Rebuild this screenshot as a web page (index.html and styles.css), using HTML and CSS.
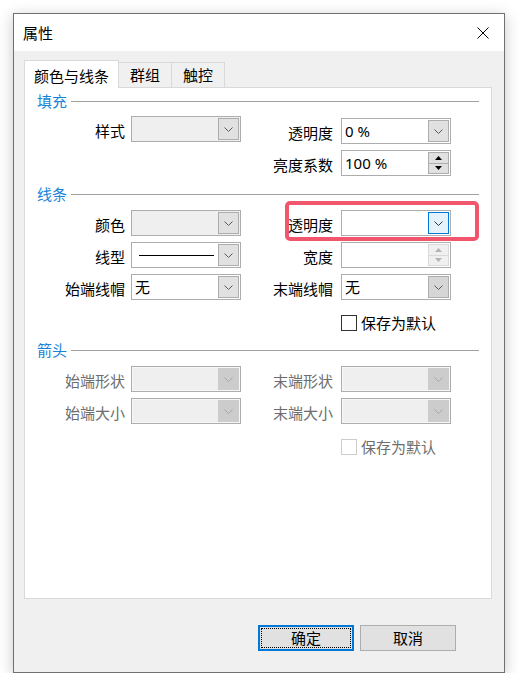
FILE: index.html
```html
<!DOCTYPE html>
<html lang="zh-CN">
<head>
<meta charset="utf-8">
<title>属性</title>
<link rel="stylesheet" href="styles.css">
</head>
<body>
<div class="window">
  <div class="titlebar">
    <span class="title">属性</span>
    <svg class="close" width="12" height="12" viewBox="0 0 12 12"><path d="M0.5 0.5 L11.5 11.5 M11.5 0.5 L0.5 11.5" stroke="#000" stroke-width="1" fill="none"/></svg>
  </div>
  <div class="body">
    <div class="tabs">
      <div class="tab active">颜色与线条</div>
      <div class="tab">群组</div>
      <div class="tab">触控</div>
    </div>
    <div class="panel">
      <div class="group-head"><span>填充</span><i></i></div>
      <div class="fields fill">
        <div class="lbl">样式</div>
        <div class="combo gray"><span class="val"></span><span class="drop"><svg width="9" height="5" viewBox="0 0 9 5"><path d="M0.5 0.5 L4.5 4.5 L8.5 0.5" fill="none" stroke="currentColor"/></svg></span></div>
        <div class="lbl r low">透明度</div>
        <div class="combo low"><span class="val">0 %</span><span class="drop"><svg width="9" height="5" viewBox="0 0 9 5"><path d="M0.5 0.5 L4.5 4.5 L8.5 0.5" fill="none" stroke="currentColor"/></svg></span></div>
        <div class="lbl r c3">亮度系数</div>
        <div class="combo spin"><span class="val">100 %</span><span class="spinbtns"><span class="sb"><svg width="7" height="4" viewBox="0 0 7 4"><path d="M0 4 L3.5 0 L7 4Z" fill="currentColor"/></svg></span><span class="sb"><svg width="7" height="4" viewBox="0 0 7 4"><path d="M0 0 L3.5 4 L7 0Z" fill="currentColor"/></svg></span></span></div>
      </div>

      <div class="group-head g2"><span>线条</span><i></i></div>
      <div class="fields lines">
        <div class="lbl">颜色</div>
        <div class="combo gray"><span class="val"></span><span class="drop"><svg width="9" height="5" viewBox="0 0 9 5"><path d="M0.5 0.5 L4.5 4.5 L8.5 0.5" fill="none" stroke="currentColor"/></svg></span></div>
        <div class="lbl r">透明度</div>
        <div class="combo"><span class="val"></span><span class="drop focus"><svg width="9" height="5" viewBox="0 0 9 5"><path d="M0.5 0.5 L4.5 4.5 L8.5 0.5" fill="none" stroke="currentColor"/></svg></span></div>

        <div class="lbl">线型</div>
        <div class="combo"><span class="line-sample"><i></i></span><span class="drop"><svg width="9" height="5" viewBox="0 0 9 5"><path d="M0.5 0.5 L4.5 4.5 L8.5 0.5" fill="none" stroke="currentColor"/></svg></span></div>
        <div class="lbl r">宽度</div>
        <div class="combo spin dis-spin"><span class="val"></span><span class="spinbtns"><span class="sb"><svg width="7" height="4" viewBox="0 0 7 4"><path d="M0 4 L3.5 0 L7 4Z" fill="currentColor"/></svg></span><span class="sb"><svg width="7" height="4" viewBox="0 0 7 4"><path d="M0 0 L3.5 4 L7 0Z" fill="currentColor"/></svg></span></span></div>

        <div class="lbl">始端线帽</div>
        <div class="combo"><span class="val">无</span><span class="drop"><svg width="9" height="5" viewBox="0 0 9 5"><path d="M0.5 0.5 L4.5 4.5 L8.5 0.5" fill="none" stroke="currentColor"/></svg></span></div>
        <div class="lbl r">末端线帽</div>
        <div class="combo"><span class="val">无</span><span class="drop hot"><svg width="9" height="5" viewBox="0 0 9 5"><path d="M0.5 0.5 L4.5 4.5 L8.5 0.5" fill="none" stroke="currentColor"/></svg></span></div>

        <div class="check"><span class="box"></span><span>保存为默认</span></div>
      </div>

      <div class="group-head g3"><span>箭头</span><i></i></div>
      <div class="fields arrows">
        <div class="lbl dis">始端形状</div>
        <div class="combo dis"><span class="val"></span><span class="drop"><svg width="9" height="5" viewBox="0 0 9 5"><path d="M0.5 0.5 L4.5 4.5 L8.5 0.5" fill="none" stroke="currentColor"/></svg></span></div>
        <div class="lbl r dis">末端形状</div>
        <div class="combo dis"><span class="val"></span><span class="drop"><svg width="9" height="5" viewBox="0 0 9 5"><path d="M0.5 0.5 L4.5 4.5 L8.5 0.5" fill="none" stroke="currentColor"/></svg></span></div>

        <div class="lbl dis">始端大小</div>
        <div class="combo dis"><span class="val"></span><span class="drop"><svg width="9" height="5" viewBox="0 0 9 5"><path d="M0.5 0.5 L4.5 4.5 L8.5 0.5" fill="none" stroke="currentColor"/></svg></span></div>
        <div class="lbl r dis">末端大小</div>
        <div class="combo dis"><span class="val"></span><span class="drop"><svg width="9" height="5" viewBox="0 0 9 5"><path d="M0.5 0.5 L4.5 4.5 L8.5 0.5" fill="none" stroke="currentColor"/></svg></span></div>

        <div class="check disabled"><span class="box"></span><span>保存为默认</span></div>
      </div>

      <div class="highlight"></div>
    </div>
    <div class="actions">
      <div class="btn default">确定</div>
      <div class="btn">取消</div>
    </div>
  </div>
</div>
</body>
</html>
```

FILE: styles.css
```css
* { box-sizing: border-box; }
html, body { margin: 0; padding: 0; background: #fff; }
body {
  font-family: "Noto Sans CJK SC", "Noto Sans", sans-serif;
  font-size: 15px;
  color: #000;
}

.window {
  margin: 13px 0 0 13px;
  width: 492px;
  height: 660px;
  border: 1px solid #707070;
  background: #f0f0f0;
  box-shadow: 0 3px 14px rgba(0, 0, 0, 0.22);
  display: flex;
  flex-direction: column;
}

.titlebar {
  height: 37px;
  background: #fff;
  display: flex;
  align-items: center;
  justify-content: space-between;
  padding: 0 15px 0 9px;
}
.title { line-height: 20px; }

.body {
  flex: 1;
  padding: 9px 12px 0 10px;
}

.tabs {
  display: flex;
  align-items: flex-end;
  height: 28px;
  margin-bottom: -1px;
  position: relative;
  z-index: 1;
}
.tab {
  height: 25px;
  margin-bottom: 1px;
  margin-left: -1px;
  padding: 2px 11px 0;
  border: 1px solid #d9d9d9;
  border-bottom: none;
  background: #f0f0f0;
  line-height: 20px;
}
.tab.active {
  height: 28px;
  margin-bottom: 0;
  margin-left: 0;
  padding: 5px 9px 0;
  background: #fff;
}

.panel {
  position: relative;
  height: 512px;
  border: 1px solid #d9d9d9;
  background: #fff;
  padding-top: 3px;
}

.group-head {
  display: flex;
  align-items: center;
  height: 20px;
  padding: 0 12px;
  color: #1883d7;
  line-height: 20px;
}
.group-head i {
  flex: 1;
  height: 1px;
  background: #a0a0a0;
  margin-left: 4px;
}
.group-head.g2 { margin-top: 8px; }
.group-head.g3 { margin-top: 7px; }

.fields {
  display: grid;
  grid-template-columns: 106px 110px 100px 110px;
  row-gap: 6px;
  align-items: start;
  margin-top: 6px;
}
.fields.fill { margin-top: 5px; }

.lbl {
  height: 26px;
  padding: 4px 6px 0 0;
  line-height: 22px;
  text-align: right;
  white-space: nowrap;
}
.lbl.r { padding-right: 8px; }
.lbl.c3 { grid-column: 3; }
.lbl.dis { color: #6d6d6d; }
.low { margin-top: 2px; }

.combo {
  width: 110px;
  height: 26px;
  border: 1px solid #adadad;
  background: #fff;
  padding: 1px 1px 1px 0;
  display: flex;
}
.combo .val {
  flex: 1;
  padding-left: 3px;
  line-height: 22px;
  font-family: "Noto Sans", "Noto Sans CJK SC", sans-serif;
  white-space: nowrap;
}
.combo.gray { background: #efefef; }

.drop {
  width: 21px;
  height: 22px;
  border: 1px solid #adadad;
  background: #e1e1e1;
  display: flex;
  align-items: center;
  justify-content: center;
  color: #5a5a5a;
}
.drop.focus {
  border-color: #0078d7;
  background: #e5f1fb;
  color: #333;
}
.drop.hot { background: #d6d6d6; }

.combo.dis {
  background: #efefef;
  box-shadow: inset 0 0 0 1px #f7f7f7;
}
.combo.dis .drop {
  border: none;
  background: #cccccc;
  color: #a8a8a8;
}

.spinbtns {
  width: 21px;
  height: 22px;
  display: flex;
  flex-direction: column;
}
.sb {
  flex: 1;
  border: 1px solid #adadad;
  background: #e1e1e1;
  display: flex;
  align-items: center;
  justify-content: center;
  color: #000;
}
.sb + .sb { margin-top: -1px; }
.dis-spin .sb {
  border-color: #dadada;
  background: #f0f0f0;
  color: #b4b4b4;
}

.line-sample {
  flex: 1;
  display: flex;
  align-items: center;
  padding: 0 4px 0 7px;
}
.line-sample i {
  flex: 1;
  height: 1px;
  background: #000;
}

.check {
  grid-column: 4;
  display: flex;
  align-items: center;
  gap: 4px;
  height: 20px;
  margin-top: 7px;
  line-height: 20px;
  white-space: nowrap;
}
.check .box {
  width: 16px;
  height: 16px;
  border: 1px solid #333;
  background: #fff;
}
.check.disabled { color: #6d6d6d; }
.check.disabled .box { border-color: #cccccc; }

.highlight {
  position: absolute;
  left: 260px;
  top: 113px;
  width: 194px;
  height: 40px;
  border: 4px solid #f2566c;
  border-radius: 5px;
}

.actions {
  display: flex;
  justify-content: flex-end;
  gap: 6px;
  margin-top: 26px;
  padding-right: 36px;
}
.btn {
  position: relative;
  width: 96px;
  height: 26px;
  border: 1px solid #adadad;
  background: #e1e1e1;
  display: flex;
  align-items: center;
  justify-content: center;
  line-height: 20px;
}
.btn.default { border: 2px solid #0078d7; }
.btn.default::after {
  content: "";
  position: absolute;
  inset: 1px;
  border: 1px dotted #000;
}
```
